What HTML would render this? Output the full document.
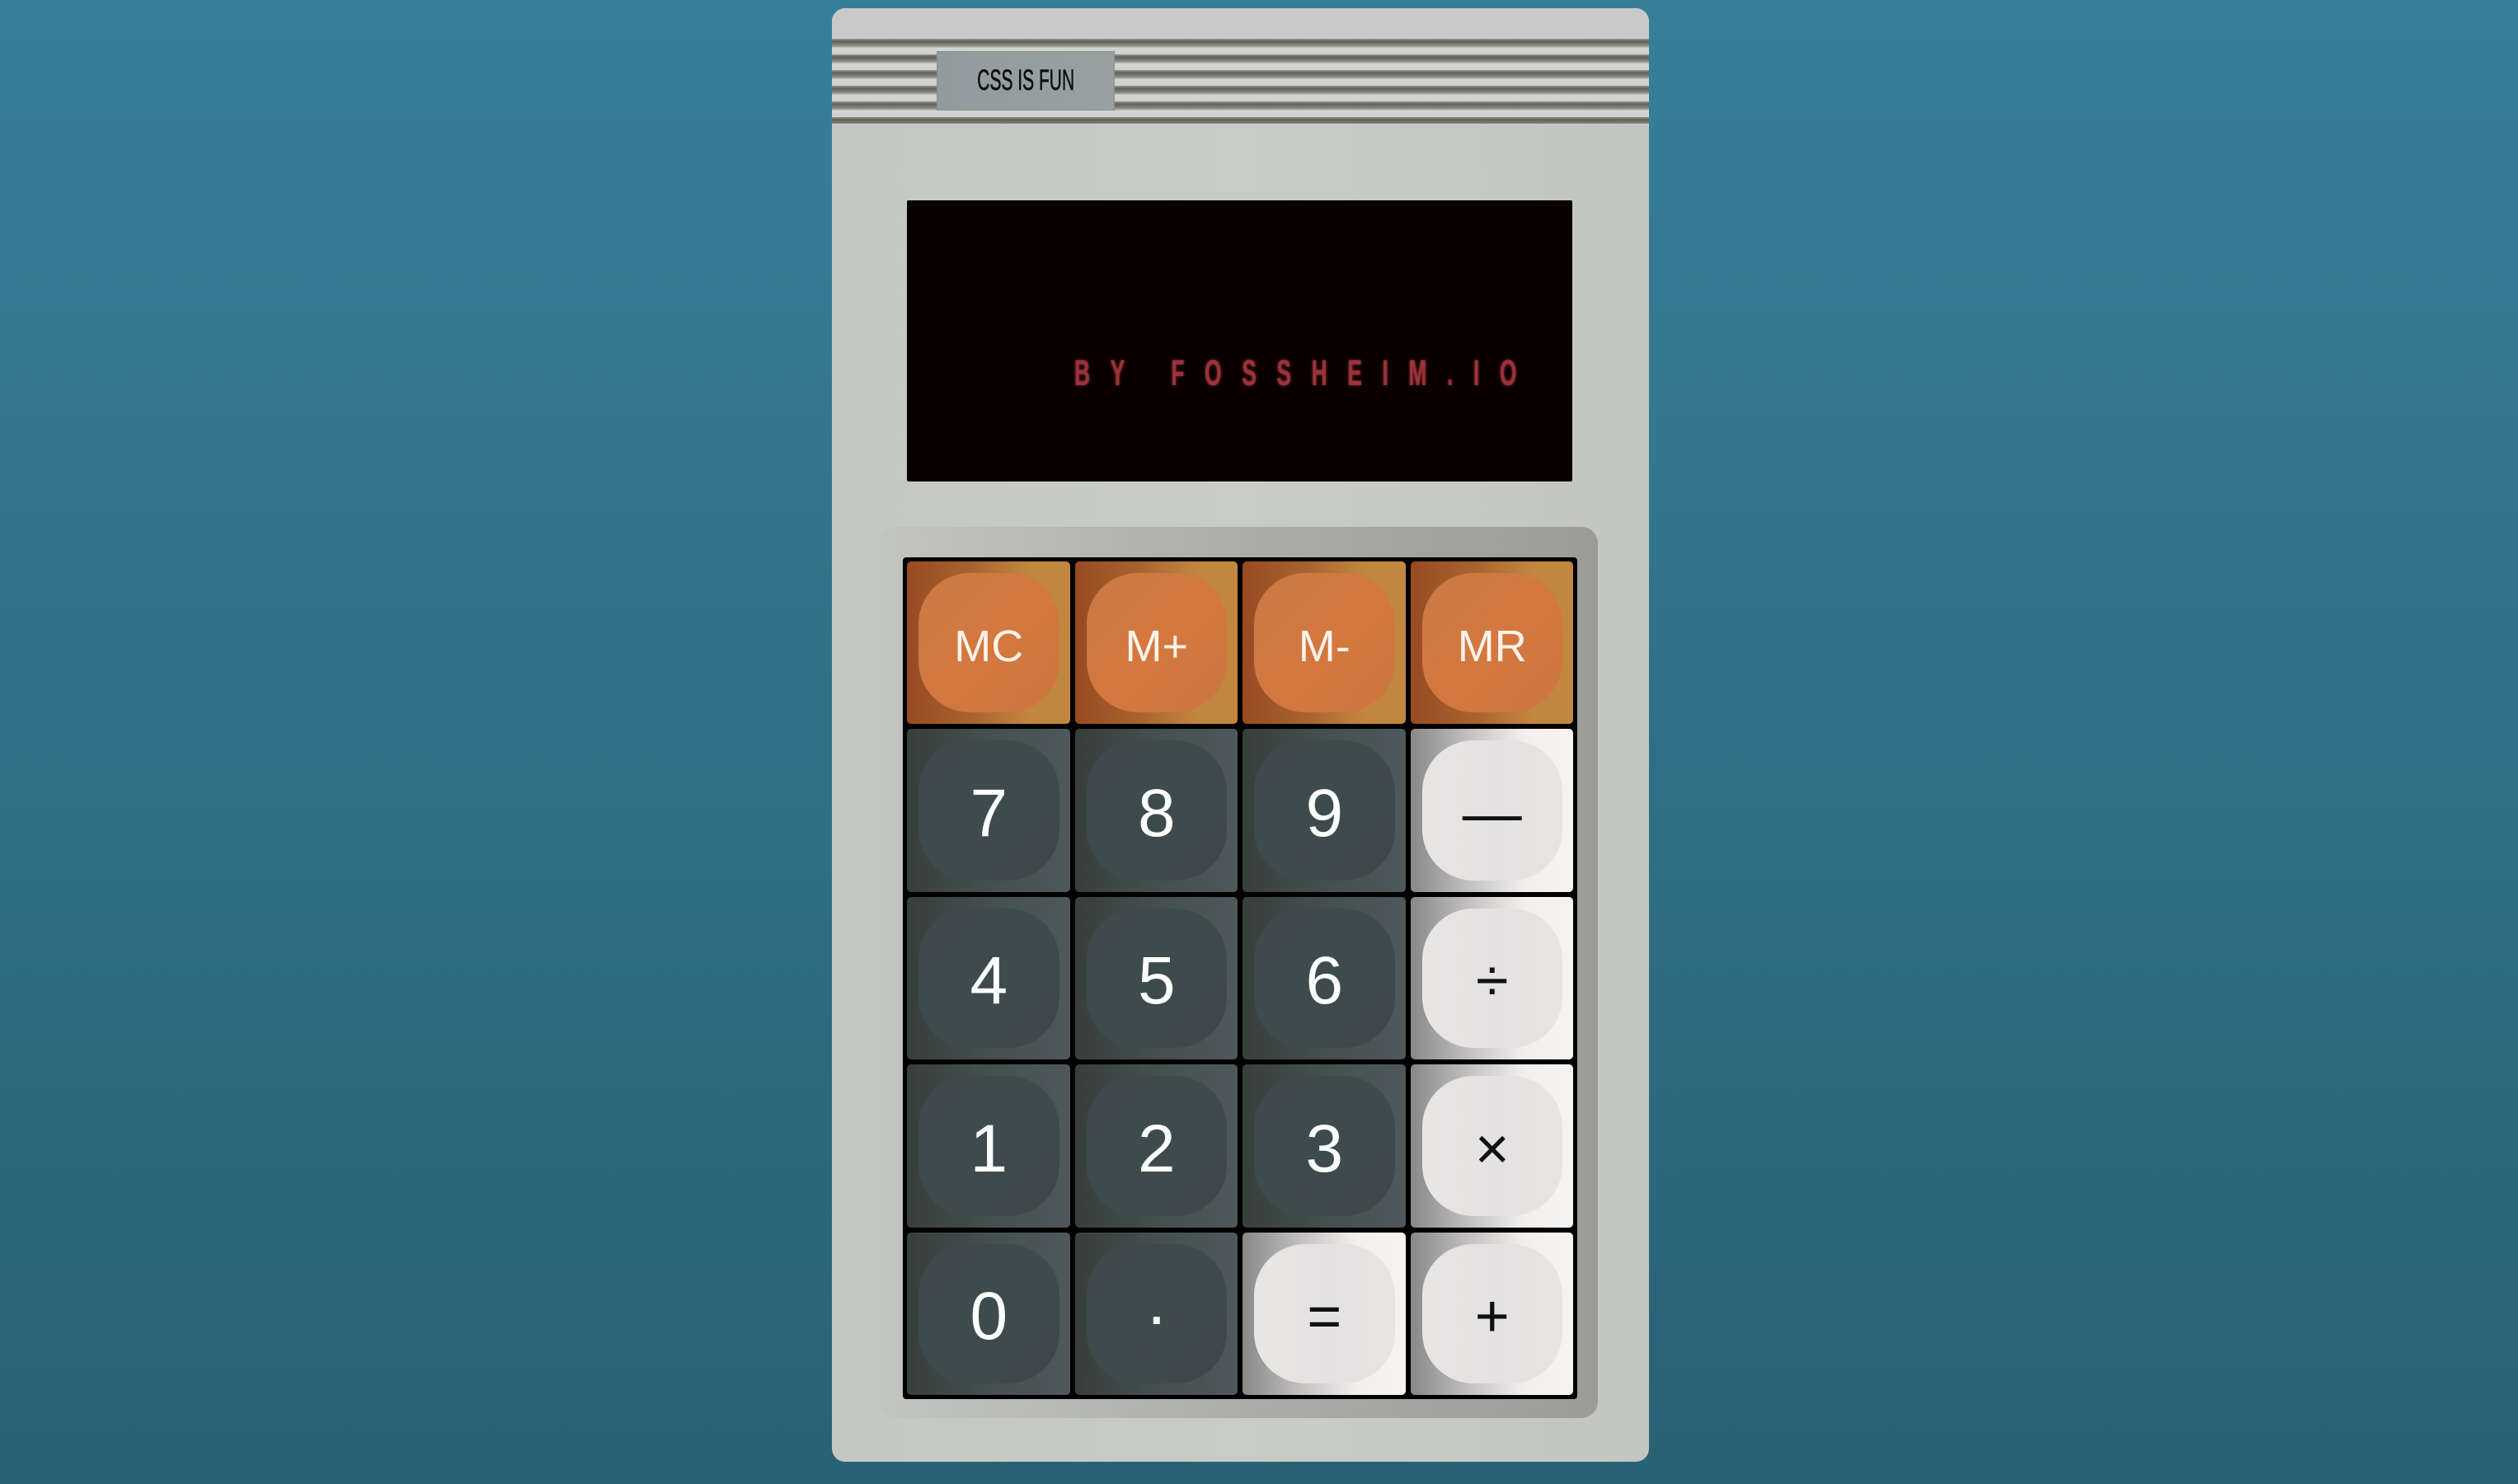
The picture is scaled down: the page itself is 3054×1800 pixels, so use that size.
<!DOCTYPE html>
<html><head><meta charset="utf-8"><style>
*{margin:0;padding:0;box-sizing:border-box}
html,body{width:3054px;height:1800px;overflow:hidden}
body{background:linear-gradient(#377f98,#2a6174);position:relative;font-family:"Liberation Sans",sans-serif}
.calc{position:absolute;left:1009px;top:10px;width:991px;height:1763px;border-radius:16px;background:linear-gradient(90deg,#c4c7c3,#c8cbc7 50%,#c3c5c2)}
.top{position:absolute;left:0;top:0;width:100%;height:37px;background:#c9c9c9;border-radius:16px 16px 0 0}
.stripes{position:absolute;left:0;top:37px;width:100%;height:103px;background:repeating-linear-gradient(180deg,#9a9a92 0,#5f6259 3px,#7b7d72 7px,#a9aa9f 10px,#d4d4d2 11px,#cfcfcf 19px)}
.label{position:absolute;left:127px;top:52px;width:216px;height:72px;background:linear-gradient(90deg,#929b9d,#98a1a0);box-shadow:0 0 2px #777 inset;display:flex;align-items:center;justify-content:center}
.label span{font-size:35px;color:#0d0d0d;display:inline-block;transform:scaleX(.6);-webkit-text-stroke:0.6px #0d0d0d;white-space:nowrap}
.disp{position:absolute;left:91px;top:233px;width:807px;height:341px;background:#0a0000;border-radius:2px}
.dtext{position:absolute;left:1303px;top:428px;font-weight:bold;font-size:44px;line-height:50px;color:#9b333a;letter-spacing:41px;text-shadow:0 0 5px #9b333a;white-space:nowrap;transform:scaleX(.6);transform-origin:0 0}
.panel{position:absolute;left:1067px;top:639px;width:871px;height:1081px;border-radius:20px;background:linear-gradient(90deg,#c2c4bf,#a8a9a4 60%,#9b9c97)}
.grid{position:absolute;left:1095px;top:676px;width:818px;height:1021px;background:#000;border-radius:4px;padding:5px;display:grid;grid-template-columns:repeat(4,1fr);grid-template-rows:repeat(5,1fr);gap:6px}
.c{border-radius:5px;position:relative}
.c i{position:absolute;left:14px;top:14px;right:13px;bottom:14px;border-radius:62px;font-style:normal;display:flex;align-items:center;justify-content:center;padding-top:8px}
.o{background:linear-gradient(90deg,#984a22,#a8632f 40%,#c2873f 75%,#c2873f)}
.o i{background:linear-gradient(135deg,#c87a45,#d4783f 50%,#cc7540);color:#fff3ea;font-size:54px}
.d{background:linear-gradient(90deg,#373f3c,#44504f 50%,#4f585b)}
.d i{background:linear-gradient(135deg,#3f4a4b,#3e4b4d,#3c4749);color:#fbffff;font-size:82px}
.l{background:linear-gradient(90deg,#888,#c9c7c6 40%,#f2efed 70%,#f6f3f1)}
.l i{background:linear-gradient(90deg,#e9e7e5,#e3e1e1 50%,#e8e4e3);color:#111;font-size:72px}
</style></head><body>
<div class="calc">
<div class="top"></div>
<div class="stripes"></div>
<div class="label"><span>CSS IS FUN</span></div>
<div class="disp"></div>
</div>
<div class="dtext">BY FOSSHEIM.IO</div>
<div class="panel"></div>
<div class="grid">
<div class="c o"><i>MC</i></div><div class="c o"><i>M+</i></div><div class="c o"><i>M-</i></div><div class="c o"><i>MR</i></div>
<div class="c d"><i>7</i></div><div class="c d"><i>8</i></div><div class="c d"><i>9</i></div><div class="c l"><i>—</i></div>
<div class="c d"><i>4</i></div><div class="c d"><i>5</i></div><div class="c d"><i>6</i></div><div class="c l"><i>÷</i></div>
<div class="c d"><i>1</i></div><div class="c d"><i>2</i></div><div class="c d"><i>3</i></div><div class="c l"><i>×</i></div>
<div class="c d"><i>0</i></div><div class="c d"><i>·</i></div><div class="c l"><i>=</i></div><div class="c l"><i>+</i></div>
</div>
</body></html>
